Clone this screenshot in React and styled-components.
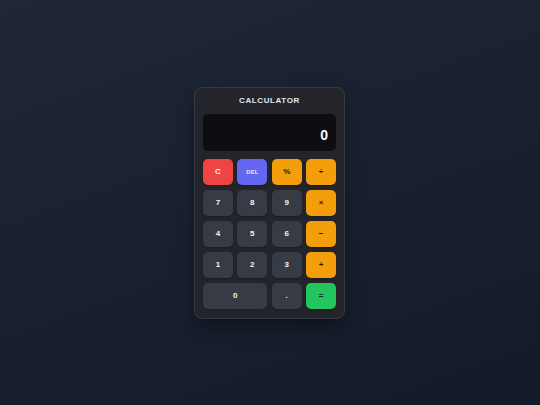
import React from 'react';
import styled, { createGlobalStyle } from 'styled-components';

const GlobalStyle = createGlobalStyle`
  html, body {
    margin: 0;
    padding: 0;
    height: 100%;
  }
  body {
    background: linear-gradient(160deg, #1f2635 0%, #192131 50%, #141a27 100%);
    font-family: 'Liberation Sans', Arial, sans-serif;
  }
  #root {
    height: 100%;
  }
`;

const Page = styled.div`
  height: 405px;
  display: flex;
  align-items: center;
  justify-content: center;
  padding-right: 1px;
`;

const Card = styled.div`
  box-sizing: border-box;
  width: 151px;
  padding: 8px 8px 9px;
  background: #23252b;
  border: 1px solid #363941;
  border-radius: 8px;
  box-shadow: 0 8px 20px rgba(0, 0, 0, 0.35);
  display: flex;
  flex-direction: column;
  gap: 8px;
`;

const Title = styled.h1`
  margin: 0;
  text-align: center;
  color: #e5e7eb;
  font-size: 8px;
  font-weight: 700;
  letter-spacing: 0.6px;
  line-height: 10px;
`;

const Display = styled.div`
  height: 37px;
  box-sizing: border-box;
  padding: 5px 8px 0;
  background: #0c0e12;
  border-radius: 5px;
  display: flex;
  align-items: center;
  justify-content: flex-end;
  color: #f9fafb;
  font-size: 14px;
  font-weight: 700;
`;

const Keys = styled.div`
  display: grid;
  grid-template-columns: repeat(4, 1fr);
  grid-auto-rows: 26px;
  column-gap: 4.5px;
  row-gap: 5px;
`;

const palette = {
  num: { bg: '#373b44', fg: '#f3f4f6' },
  clear: { bg: '#ef4444', fg: '#fff5f5' },
  del: { bg: '#6366f1', fg: '#e0e7ff' },
  op: { bg: '#f59e0b', fg: '#2a1a05' },
  eq: { bg: '#22c55e', fg: '#052e16' },
};

const Key = styled.button`
  border: none;
  border-radius: 5px;
  padding: 0;
  background: ${(p) => palette[p.$kind].bg};
  color: ${(p) => palette[p.$kind].fg};
  font-family: inherit;
  font-size: ${(p) => (p.$small ? '6px' : '8px')};
  font-weight: 700;
  grid-column: ${(p) => (p.$wide ? 'span 2' : 'auto')};
  box-shadow: 0 1px 2px rgba(0, 0, 0, 0.25);
  cursor: pointer;
`;

const keys = [
  { label: 'C', kind: 'clear' },
  { label: 'DEL', kind: 'del', small: true },
  { label: '%', kind: 'op' },
  { label: '÷', kind: 'op' },
  { label: '7', kind: 'num' },
  { label: '8', kind: 'num' },
  { label: '9', kind: 'num' },
  { label: '×', kind: 'op' },
  { label: '4', kind: 'num' },
  { label: '5', kind: 'num' },
  { label: '6', kind: 'num' },
  { label: '−', kind: 'op' },
  { label: '1', kind: 'num' },
  { label: '2', kind: 'num' },
  { label: '3', kind: 'num' },
  { label: '+', kind: 'op' },
  { label: '0', kind: 'num', wide: true },
  { label: '.', kind: 'num' },
  { label: '=', kind: 'eq' },
];

export default function App() {
  return (
    <>
      <GlobalStyle />
      <Page>
        <Card>
          <Title>CALCULATOR</Title>
          <Display>0</Display>
          <Keys>
            {keys.map((k) => (
              <Key key={k.label} $kind={k.kind} $wide={k.wide} $small={k.small}>
                {k.label}
              </Key>
            ))}
          </Keys>
        </Card>
      </Page>
    </>
  );
}
